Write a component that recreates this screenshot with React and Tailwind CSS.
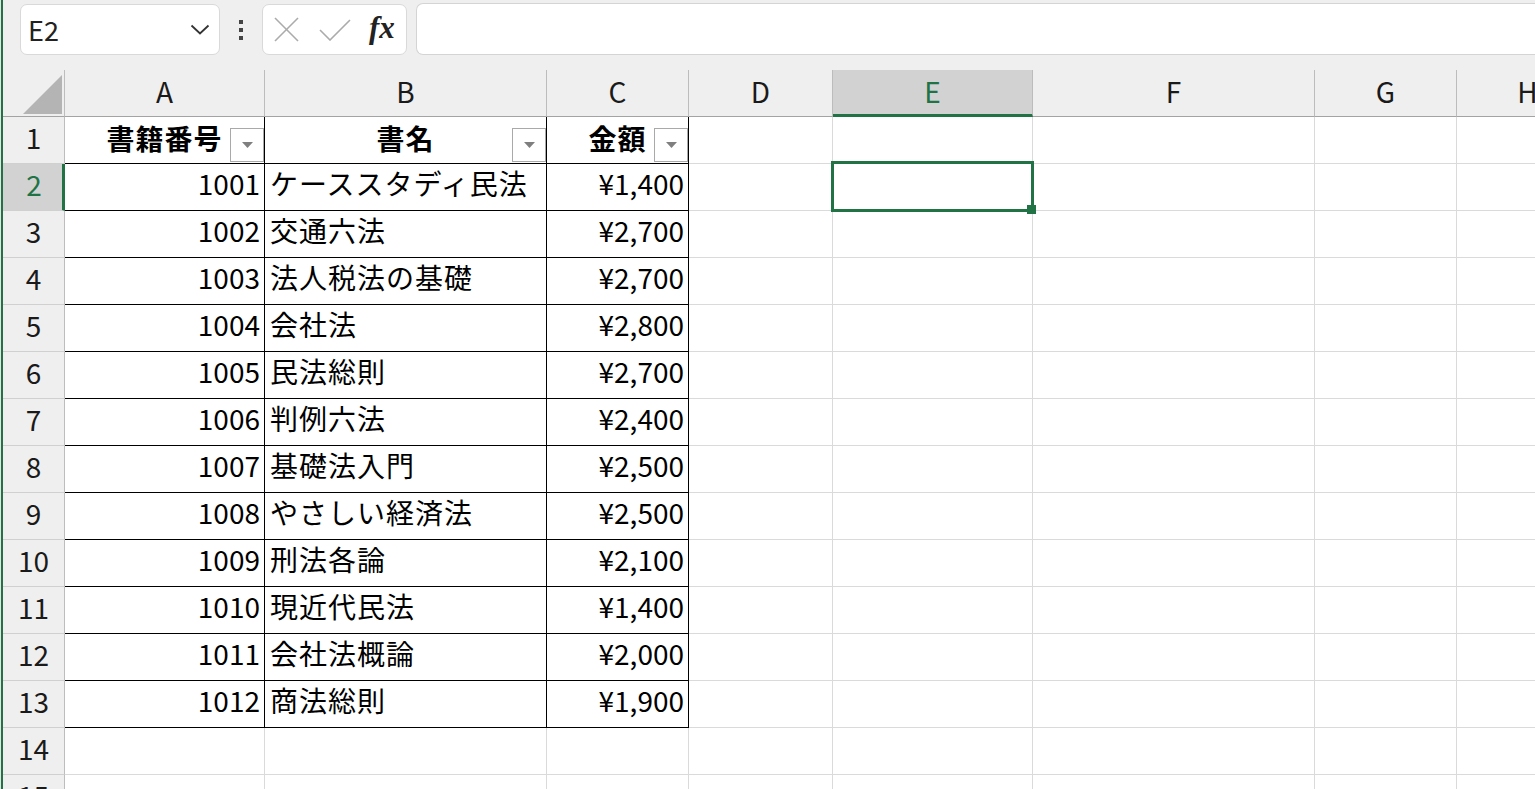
import React from "react";

const rows = [
  ["1001", "ケーススタディ民法", "¥1,400"],
  ["1002", "交通六法", "¥2,700"],
  ["1003", "法人税法の基礎", "¥2,700"],
  ["1004", "会社法", "¥2,800"],
  ["1005", "民法総則", "¥2,700"],
  ["1006", "判例六法", "¥2,400"],
  ["1007", "基礎法入門", "¥2,500"],
  ["1008", "やさしい経済法", "¥2,500"],
  ["1009", "刑法各論", "¥2,100"],
  ["1010", "現近代民法", "¥1,400"],
  ["1011", "会社法概論", "¥2,000"],
  ["1012", "商法総則", "¥1,900"],
];

const cols = [
  { k: "A", w: "w-[200px]" },
  { k: "B", w: "w-[282px]" },
  { k: "C", w: "w-[142px]" },
  { k: "D", w: "w-[144px]" },
  { k: "E", w: "w-[200px]" },
  { k: "F", w: "w-[282px]" },
  { k: "G", w: "w-[142px]" },
  { k: "H", w: "w-[142px]" },
];

function FilterBtn() {
  return (
    <div className="absolute right-0 bottom-[1px] w-[34px] h-[34px] border border-[#a9a9a9] bg-white flex items-center justify-center">
      <svg width="11" height="6" viewBox="0 0 11 6">
        <polygon points="0,0 11,0 5.5,6" fill="#7f7f7f" />
      </svg>
    </div>
  );
}

function Toolbar() {
  return (
    <div className="h-[70px] shrink-0 flex items-start pt-[4px] bg-[#efefef]">
      <div className="ml-[17px] w-[200px] h-[51px] shrink-0 bg-white border border-[#d9d9d9] rounded-[7px] flex items-center justify-between pl-[7px] pr-[9px]">
        <span className="text-[27px] text-[#222] leading-none">E2</span>
        <svg width="20" height="11" viewBox="0 0 20 11">
          <polyline points="1.5,1.5 10,9.5 18.5,1.5" fill="none" stroke="#333" strokeWidth="1.8" />
        </svg>
      </div>
      <div className="w-[42px] h-[51px] shrink-0 flex flex-col items-center justify-center gap-[4px]">
        <div className="w-[4px] h-[4px] bg-[#444]" />
        <div className="w-[4px] h-[4px] bg-[#444]" />
        <div className="w-[4px] h-[4px] bg-[#444]" />
      </div>
      <div className="w-[145px] h-[51px] shrink-0 bg-white border border-[#d9d9d9] rounded-[7px] flex items-center pl-[11px]">
        <svg width="25" height="25" viewBox="0 0 25 25">
          <line x1="1" y1="1" x2="24" y2="24" stroke="#ababab" strokeWidth="1.6" />
          <line x1="24" y1="1" x2="1" y2="24" stroke="#ababab" strokeWidth="1.6" />
        </svg>
        <svg className="ml-[20px]" width="32" height="22" viewBox="0 0 32 22">
          <polyline points="1,11 11,21 31,1" fill="none" stroke="#ababab" strokeWidth="1.6" />
        </svg>
        <span className="ml-[18px] text-[31px] leading-none italic font-bold font-['Liberation_Serif',serif] text-[#222] -mt-[4px]">fx</span>
      </div>
      <div className="ml-[9px] flex-1 h-[52px] -mt-[1px] bg-white border border-r-0 border-[#d4d4d4] rounded-l-[7px]" />
    </div>
  );
}

function HeaderRow() {
  return (
    <div className="flex h-[47px] shrink-0 bg-[#efefef] overflow-hidden">
      <div className="w-[62px] shrink-0 h-full border-r border-b border-r-[#bdbdbd] border-b-[#a3a3a3] flex items-end justify-end pr-[2px] pb-[2px]">
        <svg width="39" height="39" viewBox="0 0 39 39">
          <polygon points="39,0 39,39 0,39" fill="#b4b4b4" />
        </svg>
      </div>
      {cols.map((c) => {
        const sel = c.k === "E";
        return (
          <div
            key={c.k}
            className={`${c.w} shrink-0 h-full border-r border-r-[#bcbcbc] flex items-center justify-center text-[28px] leading-none ${
              sel
                ? "bg-[#d2d2d2] border-b-[3px] border-b-[#217346] text-[#217346]"
                : "border-b border-b-[#a3a3a3] text-[#1a1a1a]"
            }`}
          >
            <span className={sel ? "-mt-[2px]" : "-mt-[4px]"}>{c.k}</span>
          </div>
        );
      })}
    </div>
  );
}

function Row({ n }) {
  const inTable = n <= 13;
  const data = n >= 2 && n <= 13 ? rows[n - 2] : null;
  const selRow = n === 2;
  return (
    <div className="flex h-[47px] shrink-0">
      <div
        className={`w-[62px] shrink-0 h-full border-b border-b-[#d0d0d0] flex items-center justify-center text-[28px] leading-none ${
          selRow
            ? "bg-[#d2d2d2] border-r-[3px] border-r-[#217346] text-[#217346] pl-[3px]"
            : "bg-[#efefef] border-r border-r-[#bdbdbd] text-[#1a1a1a]"
        }`}
      >
        <span className="-mt-[7px]">{n}</span>
      </div>
      {cols.map((c, i) => {
        const black = inTable && i < 3;
        const borders = black
          ? "border-r border-b border-black"
          : "border-r border-b border-[#dadada]";
        let content = null;
        if (n === 1 && i < 3) {
          const label = ["書籍番号", "書名", "金額"][i];
          content = (
            <>
              <div className="w-full h-full flex items-center justify-center font-bold text-[28px] tracking-[1px] text-black -mt-[2px]">
                <span>{label}</span>
              </div>
              <FilterBtn />
            </>
          );
        } else if (data && i < 3) {
          const align =
            i === 1 ? "justify-start pl-[5px] tracking-[1px]" : "justify-end pr-[4px]";
          content = (
            <div className={`w-full h-full flex items-center ${align} text-[28px] text-black leading-none -mt-[4px]`}>
              <span>{data[i]}</span>
            </div>
          );
        }
        const sel = n === 2 && c.k === "E";
        return (
          <div key={c.k} className={`${c.w} shrink-0 h-full relative ${borders} bg-white`}>
            {content}
            {sel && (
              <>
                <div className="absolute left-[-2px] top-[-3px] w-[203px] h-[51px] border-[3px] border-[#217346] z-10" />
                <div className="absolute left-[194px] top-[41px] w-[9px] h-[9px] bg-[#217346] z-20" />
              </>
            )}
          </div>
        );
      })}
    </div>
  );
}

export default function App() {
  const nums = Array.from({ length: 15 }, (_, i) => i + 1);
  return (
    <div className="w-[1535px] h-[789px] overflow-hidden flex bg-white font-['Noto_Sans_CJK_JP','Noto_Sans',sans-serif]">
      <div className="w-px h-full bg-[#e4e4e4] shrink-0" />
      <div className="w-[2px] h-full bg-[#217346] shrink-0" />
      <div className="flex-1 flex flex-col min-w-0 overflow-hidden">
        <Toolbar />
        <HeaderRow />
        {nums.map((n) => (
          <Row key={n} n={n} />
        ))}
      </div>
    </div>
  );
}
